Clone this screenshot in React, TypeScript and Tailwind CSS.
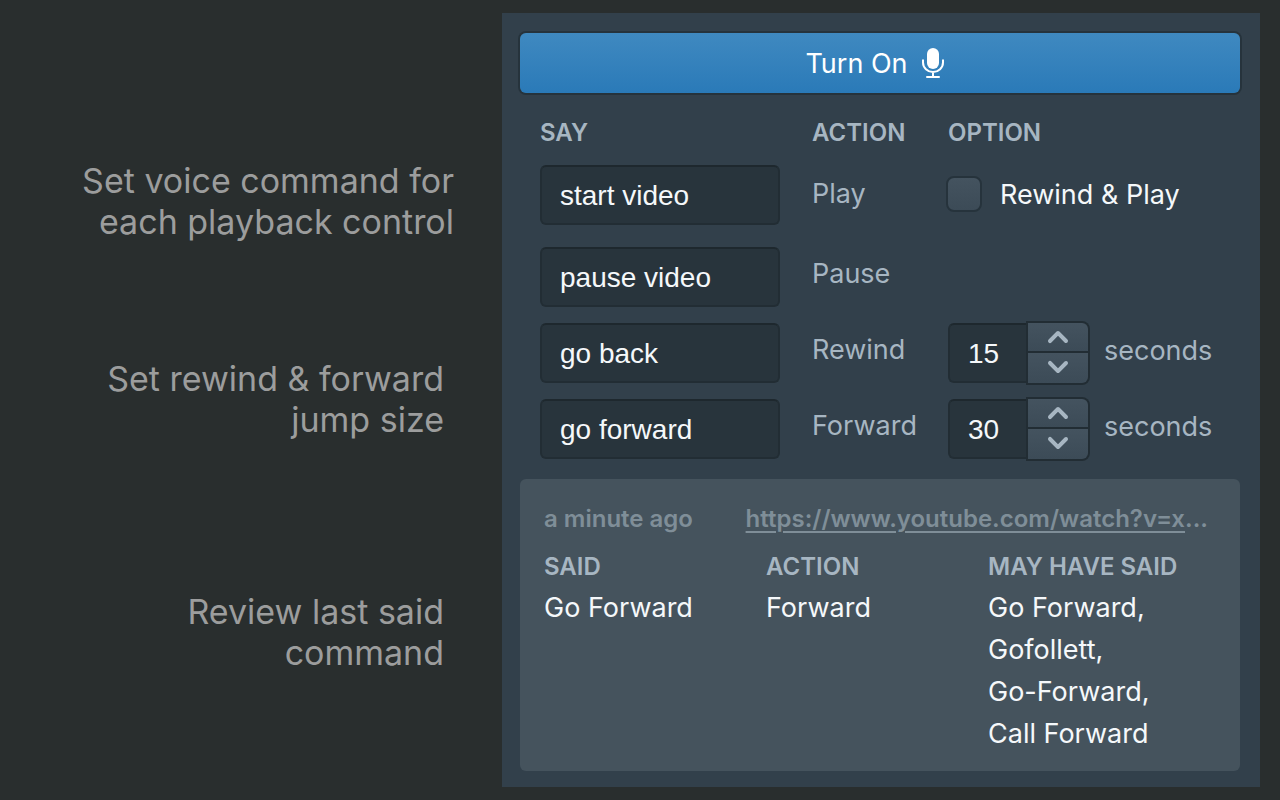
import { ReactNode, useState } from 'react'
import clsx from 'clsx'

const said = ['Go Forward,', 'Gofollett,', 'Go-Forward,', 'Call Forward']

function MicIcon() {
  return (
    <svg viewBox="0 0 22 30" className="w-[22px] h-[30px] mb-[2px]" fill="none" aria-hidden="true">
      <rect x="5" y="0" width="12" height="21" rx="6" fill="currentColor" />
      <path
        d="M1 11.5v3a10 9.6 0 0 0 20 0v-3M11 24v5"
        stroke="currentColor"
        strokeWidth="2"
      />
      <path d="M5 29h12" stroke="currentColor" strokeWidth="2" strokeLinecap="round" />
    </svg>
  )
}

function Chevron({ down }: { down?: boolean }) {
  return (
    <svg viewBox="0 0 16 16" className="w-8 h-8 shrink-0" fill="currentColor" aria-hidden="true">
      {down ? (
        <path d="M12 5c-.28 0-.53.11-.71.29L8 8.59l-3.29-3.3a1.003 1.003 0 00-1.42 1.42l4 4c.18.18.43.29.71.29s.53-.11.71-.29l4-4A1.003 1.003 0 0012 5z" />
      ) : (
        <path d="M12.71 9.29l-4-4C8.53 5.11 8.28 5 8 5s-.53.11-.71.29l-4 4a1.003 1.003 0 001.42 1.42L8 7.41l3.29 3.29c.18.19.43.3.71.3a1.003 1.003 0 00.71-1.71z" />
      )}
    </svg>
  )
}

const field =
  "h-[60px] bg-[#28343c] border-2 border-[#222d34] border-t-[#1e282e] px-[18px] pt-[2px] font-['Liberation_Sans',sans-serif] text-[28px] text-[#f5f8fa] focus:outline-none"

const stepButton =
  'flex items-center justify-center w-[60px] overflow-hidden text-[#a7b6c2] bg-linear-to-b from-[#44535f] to-[#3c4b57]'

function Seconds({ label, initial }: { label: string; initial: number }) {
  const [value, setValue] = useState(initial)

  return (
    <div className="flex">
      <input
        aria-label={label}
        inputMode="numeric"
        value={value}
        onChange={(e) => setValue(Number(e.target.value) || 0)}
        className={clsx(field, 'w-20 rounded-l-md border-r-0')}
      />
      <div className="flex flex-col gap-[2px] h-[60px] rounded-r-md bg-[#222d34] ring-2 ring-[#222d34]">
        <button
          aria-label={`Increase ${label}`}
          onClick={() => setValue(value + 1)}
          className={clsx(stepButton, 'h-7 rounded-tr-md')}
        >
          <Chevron />
        </button>
        <button
          aria-label={`Decrease ${label}`}
          onClick={() => setValue(value - 1)}
          className={clsx(stepButton, 'h-[30px] pb-[2px] rounded-br-md')}
        >
          <Chevron down />
        </button>
      </div>
      <span className="ml-4 mt-[10px] text-[#a7b6c2]">seconds</span>
    </div>
  )
}

type RowProps = {
  action: string
  phrase: string
  tall?: boolean
  children?: ReactNode
}

function CommandRow({ action, phrase, tall, children }: RowProps) {
  return (
    <tr className="align-top">
      <td className={clsx('w-[272px]', tall ? 'pt-[14px] pb-[22px]' : 'pb-4')}>
        <input
          aria-label={`Phrase for ${action}`}
          defaultValue={phrase}
          className={clsx(field, 'block w-60 rounded-md')}
        />
      </td>
      <td className={clsx('w-[136px] text-[#a7b6c2]', tall ? 'pt-[25px]' : 'pt-[9px]')}>
        {action}
      </td>
      <td className={clsx(tall && 'pt-6')}>{children}</td>
    </tr>
  )
}

function Note({ className, children }: { className?: string; children: ReactNode }) {
  return (
    <p className={clsx('text-right text-[34px] leading-[41px] text-[#9c9d9d]', className)}>
      {children}
    </p>
  )
}

export default function App() {
  return (
    <main className="grid grid-cols-[502fr_758fr] items-start min-h-screen bg-[#292e2e] pt-[13px] pr-5 pb-[13px] font-['Inter',sans-serif]">
      <aside className="flex flex-col pt-[147px] pr-12">
        <Note>
          Set voice command for
          <br />
          each playback control
        </Note>
        <Note className="mt-[116px] pr-[10px]">
          Set rewind &amp; forward
          <br />
          jump size
        </Note>
        <Note className="mt-[151px] pr-[10px]">
          Review last said
          <br />
          command
        </Note>
      </aside>

      <section className="bg-[#32404b] pt-5 pr-5 pb-4 pl-[18px] text-[27px] leading-9 text-[#f5f8fa]">
        <button className="flex items-center justify-center gap-[14px] w-full h-[60px] rounded-md pt-[2px] pr-[11px] bg-linear-to-b from-[#3f89c0] to-[#2a7ab8] ring-2 ring-[#26333c] text-white">
          Turn On
          <MicIcon />
        </button>

        <table className="mt-[22px] ml-5">
          <thead>
            <tr className="text-left text-2xl leading-9 text-[#a7b6c2]">
              <th className="font-semibold">SAY</th>
              <th className="font-semibold">ACTION</th>
              <th className="font-semibold">OPTION</th>
            </tr>
          </thead>
          <tbody>
            <CommandRow action="Play" phrase="start video" tall>
              <label className="flex items-center gap-[18px] whitespace-nowrap">
                <input
                  type="checkbox"
                  className="appearance-none w-9 h-9 -ml-[2px] rounded-lg border-2 border-[#26333c] bg-linear-to-b from-[#44535f] to-[#3c4b57] checked:from-[#3f89c0] checked:to-[#2a7ab8]"
                />
                <span className="pt-[2px]">Rewind &amp; Play</span>
              </label>
            </CommandRow>
            <CommandRow action="Pause" phrase="pause video" />
            <CommandRow action="Rewind" phrase="go back">
              <Seconds label="rewind seconds" initial={15} />
            </CommandRow>
            <CommandRow action="Forward" phrase="go forward">
              <Seconds label="forward seconds" initial={30} />
            </CommandRow>
          </tbody>
        </table>

        <div className="mt-1 rounded-md bg-[#45535d] pt-[22px] pr-8 pb-4 pl-6">
          <div className="flex justify-between text-2xl leading-9 font-semibold text-[#7f8e98]">
            <span>a minute ago</span>
            <span className="whitespace-nowrap">
              <a
                href="https://www.youtube.com/watch?v=x"
                className="underline decoration-2 underline-offset-4"
              >
                https://www.youtube.com/watch?v=x
              </a>
              ...
            </span>
          </div>
          <div className="grid grid-cols-[222fr_222fr_220fr] mt-3">
            <div>
              <h2 className="mb-[2px] text-2xl leading-9 font-semibold text-[#a7b6c2]">SAID</h2>
              <p className="leading-[42px]">Go Forward</p>
            </div>
            <div>
              <h2 className="mb-[2px] text-2xl leading-9 font-semibold text-[#a7b6c2]">ACTION</h2>
              <p className="leading-[42px]">Forward</p>
            </div>
            <div>
              <h2 className="mb-[2px] text-2xl leading-9 font-semibold text-[#a7b6c2]">
                MAY HAVE SAID
              </h2>
              {said.map((phrase) => (
                <p key={phrase} className="leading-[42px]">
                  {phrase}
                </p>
              ))}
            </div>
          </div>
        </div>
      </section>
    </main>
  )
}
